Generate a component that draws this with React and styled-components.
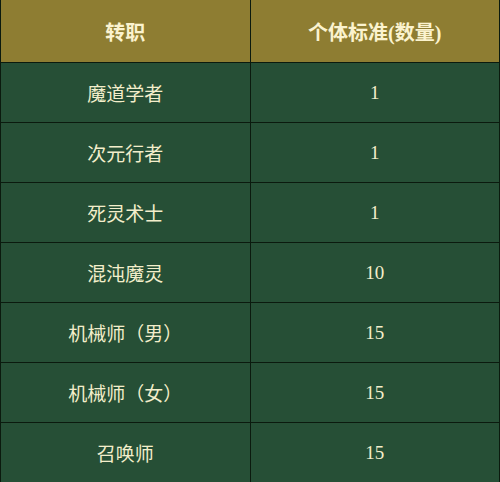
import React from 'react';
import styled, {createGlobalStyle} from 'styled-components';

const GlobalStyle = createGlobalStyle`
  html, body {
    margin: 0;
    padding: 0;
    background: #264f36;
  }
  body {
    font-family: "Liberation Serif", "Noto Sans CJK SC", serif;
  }
`;

const Table = styled.table`
  width: 500px;
  border-collapse: collapse;
  table-layout: fixed;
  border: 1px solid #0b1a0e;
  border-top: none;
`;

const HeadCell = styled.th`
  height: 62px;
  padding: 0;
  background: #8e7d32;
  color: #fbf3cf;
  font-size: 20px;
  font-weight: bold;
  text-align: center;
  vertical-align: middle;
  border: 1px solid #0b1a0e;
  border-top: none;
`;

const Cell = styled.td`
  height: 59px;
  padding: 0;
  background: #264f36;
  color: #f3eecb;
  font-size: 19px;
  text-align: center;
  vertical-align: middle;
  border: 1px solid #0b1a0e;
`;

const rows = [
  ['魔道学者', '1'],
  ['次元行者', '1'],
  ['死灵术士', '1'],
  ['混沌魔灵', '10'],
  ['机械师（男）', '15'],
  ['机械师（女）', '15'],
  ['召唤师', '15'],
];

export default function App() {
  return (
    <>
      <GlobalStyle />
      <Table>
        <thead>
          <tr>
            <HeadCell>转职</HeadCell>
            <HeadCell>个体标准(数量)</HeadCell>
          </tr>
        </thead>
        <tbody>
          {rows.map(([job, count]) => (
            <tr key={job}>
              <Cell>{job}</Cell>
              <Cell>{count}</Cell>
            </tr>
          ))}
        </tbody>
      </Table>
    </>
  );
}
